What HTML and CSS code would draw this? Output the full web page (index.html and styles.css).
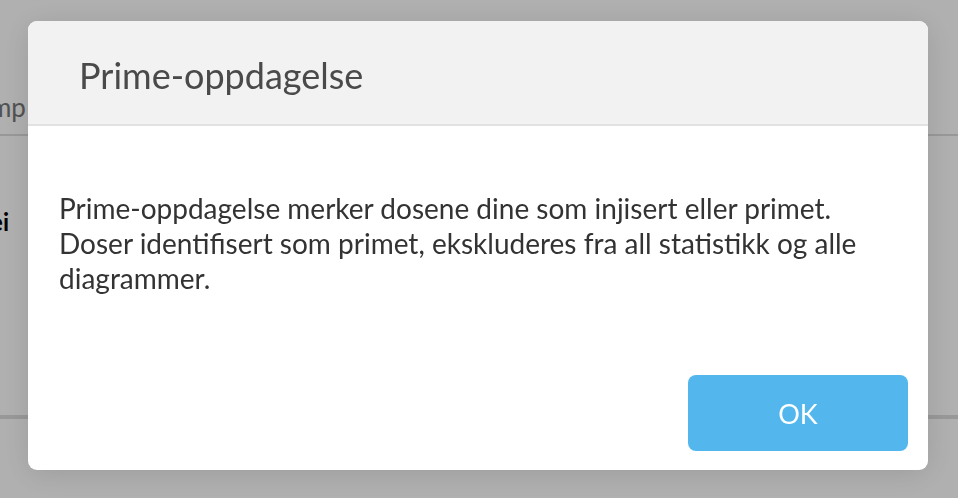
FILE: index.html
```html
<!DOCTYPE html>
<html>
  <head>
    <meta charset="utf-8" />
    <title>Prime-oppdagelse</title>
    <link rel="stylesheet" href="styles.css">
  </head>
  <body>
    <div class="page">
      <div class="row row-head"><span class="col-label">Temp</span></div>
      <div class="row row-item"><b>Nei</b></div>
      <div class="row row-foot"></div>
    </div>
    <div class="overlay">
      <div class="dialog">
        <div class="dialog-head">Prime-oppdagelse</div>
        <div class="dialog-body">
          Prime-oppdagelse merker dosene dine som injisert eller primet.
          Doser identifisert som primet, ekskluderes fra all statistikk og alle
          diagrammer.
        </div>
        <div class="dialog-foot">
          <button class="btn-ok">OK</button>
        </div>
      </div>
    </div>
  </body>
</html>
```

FILE: styles.css
```css
html, body {
  margin: 0;
  height: 100%;
}
body {
  font-family: Lato, "Open Sans", sans-serif;
  background: #fff;
  overflow: hidden;
}
.page {
  padding-top: 84px;
}
.row {
  border-bottom: 2px solid #ddd;
  margin-left: -36px;
}
.row-head {
  height: 50px;
  font-size: 26px;
  color: #777;
}
.row-head .col-label {
  display: block;
  padding-top: 7px;
}
.row-item {
  height: 279px;
  font-size: 24px;
  color: #000;
  margin-left: -48px;
}
.row-item b {
  display: block;
  padding-top: 71px;
  margin-left: 20px;
}
.overlay {
  position: fixed;
  top: 0;
  left: 0;
  right: 0;
  bottom: 0;
  background: rgba(0, 0, 0, 0.31);
  display: flex;
  justify-content: center;
  align-items: flex-start;
  padding-top: 21px;
}
.dialog {
  width: 900px;
  margin-left: -2px;
  background: #fff;
  border-radius: 9px;
  overflow: hidden;
  box-shadow: 0 4px 30px rgba(0, 0, 0, 0.12);
}
.dialog-head {
  height: 105px;
  box-sizing: border-box;
  padding: 32px 51px 0;
  background: #f2f2f2;
  border-bottom: 2px solid #e2e2e2;
  font-size: 36px;
  line-height: 44px;
  color: #4a4a4a;
}
.dialog-body {
  padding: 65px 31px 0;
  height: 184px;
  font-size: 28px;
  line-height: 35px;
  color: #333;
}
.dialog-foot {
  display: flex;
  justify-content: flex-end;
  padding: 0 20px 19px;
}
.btn-ok {
  width: 220px;
  height: 76px;
  border: none;
  border-radius: 8px;
  background: #53b7ee;
  color: #fff;
  font-family: Lato, sans-serif;
  font-size: 27px;
}
```
